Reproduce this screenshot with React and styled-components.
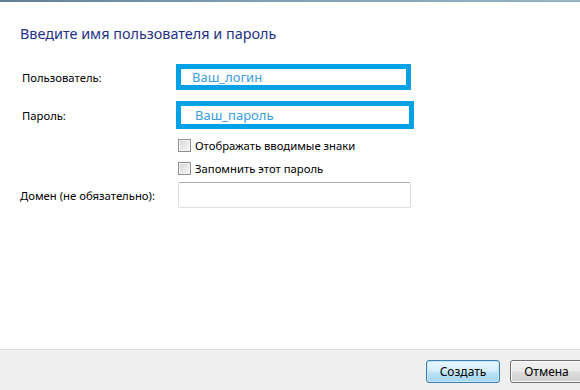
import React from "react";
import styled, { createGlobalStyle } from "styled-components";

const GlobalStyle = createGlobalStyle`
    html, body {
        margin: 0;
        padding: 0;
        background: #ffffff;
    }
    * {
        box-sizing: border-box;
    }
`;

const Window = styled.div`
    width: 580px;
    height: 390px;
    display: flex;
    flex-direction: column;
    overflow: hidden;
    font-family: "Noto Sans", "Liberation Sans", sans-serif;
    font-size: 11.3px;
    color: #000;
    background: #fff;
`;

const TopStrip = styled.div`
    height: 2px;
    background: linear-gradient(90deg, #5f7f98 0%, #7e9db3 40%, #94b4c8 100%);
`;

const Content = styled.div`
    flex: 1;
    display: flex;
    flex-direction: column;
    padding: 22px 0 0 20px;
`;

const Title = styled.h1`
    margin: 0 0 20px 0;
    font-size: 14.4px;
    font-weight: 400;
    line-height: 20px;
    color: #1e3287;
`;

const Row = styled.div`
    display: flex;
    align-items: center;
    height: ${(p) => p.$h}px;
    margin-top: ${(p) => p.$top || 0}px;
`;

const Label = styled.div`
    width: 156px;
    padding-left: ${(p) => p.$indent || 0}px;
    white-space: nowrap;
`;

const Highlight = styled.div`
    width: ${(p) => p.$w}px;
    height: 100%;
    border: 5px solid #03a2e6;
    display: flex;
    align-items: center;
    padding-left: ${(p) => p.$indent}px;
    font-size: 13px;
    color: #3a9de0;
`;

const CheckRow = styled.label`
    display: flex;
    align-items: center;
    gap: 4px;
    height: 14px;
    margin-top: ${(p) => p.$top}px;
    margin-left: 158px;
    white-space: nowrap;
`;

const CheckBox = styled.span`
    width: 13px;
    height: 13px;
    border: 1px solid #8f8f8f;
    background: linear-gradient(135deg, #d2d4d8 0%, #e8e9eb 55%, #f7f7f7 100%);
    box-shadow: inset 0 0 0 1px #f4f4f4;
    flex-shrink: 0;
`;

const TextInput = styled.div`
    width: 233px;
    height: 100%;
    margin-left: 2px;
    border: 1px solid #dbdfe6;
    border-top-color: #abadb3;
    border-radius: 2px;
    background: #fff;
`;

const Footer = styled.div`
    height: 41px;
    background: #efefef;
    border-top: 1px solid #dfdfdf;
    display: flex;
    justify-content: flex-end;
    align-items: flex-start;
    padding-top: 10px;
    gap: 10px;
    margin-right: -3px;
`;

const Button = styled.button`
    width: ${(p) => (p.$primary ? 74 : 73)}px;
    height: 23px;
    padding: 0;
    font-family: inherit;
    font-size: 12px;
    color: #000;
    border-radius: 3px;
    border: 1px solid ${(p) => (p.$primary ? "#3c7fb1" : "#707070")};
    background: ${(p) =>
        p.$primary
            ? "linear-gradient(180deg, #e9f6fd 0%, #d6eefc 48%, #bde4fb 52%, #a3d6f4 100%)"
            : "linear-gradient(180deg, #f2f2f2 0%, #ebebeb 48%, #dddddd 52%, #cfcfcf 100%)"};
    box-shadow: inset 0 0 0 1px ${(p) => (p.$primary ? "#c4e5f8" : "#fafafa")};
`;

const App = () => {
    return (
        <Window>
            <GlobalStyle />
            <TopStrip />
            <Content>
                <Title>Введите имя пользователя и пароль</Title>

                <Row $h={26}>
                    <Label $indent={2}>Пользователь:</Label>
                    <Highlight $w={235} $indent={11}>Ваш_логин</Highlight>
                </Row>
                <Row $h={28} $top={11}>
                    <Label $indent={2}>Пароль:</Label>
                    <Highlight $w={238} $indent={14}>Ваш_пароль</Highlight>
                </Row>

                <CheckRow $top={9}>
                    <CheckBox />
                    Отображать вводимые знаки
                </CheckRow>
                <CheckRow $top={9}>
                    <CheckBox />
                    Запомнить этот пароль
                </CheckRow>

                <Row $h={26} $top={7}>
                    <Label>Домен (не обязательно):</Label>
                    <TextInput />
                </Row>
            </Content>
            <Footer>
                <Button $primary>Создать</Button>
                <Button>Отмена</Button>
            </Footer>
        </Window>
    );
};

export default App;
